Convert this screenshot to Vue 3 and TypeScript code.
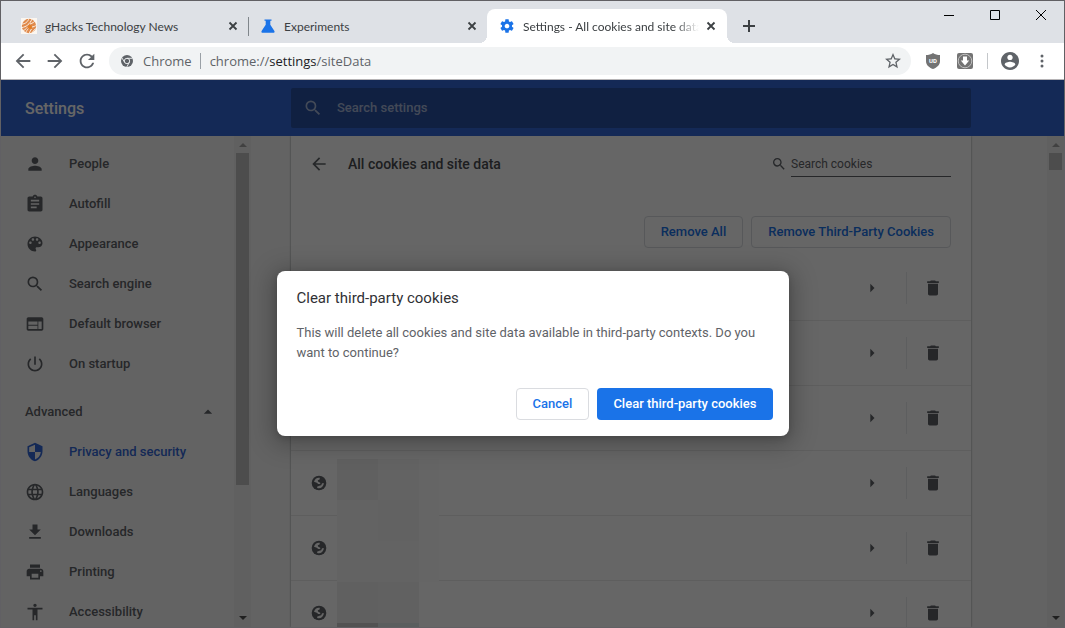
<script setup lang="ts">
import { ref } from 'vue'

interface Tab {
  title: string
  icon: 'swirl' | 'flask' | 'gear'
  active?: boolean
}

interface NavItem {
  label: string
  path: string
  active?: boolean
}

const tabs: Tab[] = [
  { title: 'gHacks Technology News', icon: 'swirl' },
  { title: 'Experiments', icon: 'flask' },
  { title: 'Settings - All cookies and site data', icon: 'gear', active: true },
]

const searchPath =
  'M15.5 14h-.79l-.28-.27A6.47 6.47 0 0 0 16 9.5 6.5 6.5 0 1 0 9.5 16c1.61 0 3.09-.59 4.23-1.57l.27.28v.79l5 4.99L20.49 19l-4.99-5zm-6 0C7.01 14 5 11.99 5 9.5S7.01 5 9.5 5 14 7.01 14 9.5 11.99 14 9.5 14z'
const backPath = 'M20 11H7.83l5.59-5.59L12 4l-8 8 8 8 1.41-1.41L7.83 13H20v-2z'
const forwardPath = 'M12 4l-1.41 1.41L16.17 11H4v2h12.17l-5.58 5.59L12 20l8-8z'

const basicItems: NavItem[] = [
  { label: 'People', path: 'M12 12c2.21 0 4-1.79 4-4s-1.79-4-4-4-4 1.79-4 4 1.79 4 4 4zm0 2c-2.67 0-8 1.34-8 4v2h16v-2c0-2.66-5.33-4-8-4z' },
  { label: 'Autofill', path: 'M19 3h-4.18C14.4 1.84 13.3 1 12 1c-1.3 0-2.4.84-2.82 2H5c-1.1 0-2 .9-2 2v14c0 1.1.9 2 2 2h14c1.1 0 2-.9 2-2V5c0-1.1-.9-2-2-2zm-7 0c.55 0 1 .45 1 1s-.45 1-1 1-1-.45-1-1 .45-1 1-1zm2 14H7v-2h7v2zm3-4H7v-2h10v2zm0-4H7V7h10v2z' },
  { label: 'Appearance', path: 'M12 3c-4.97 0-9 4.03-9 9s4.03 9 9 9c.83 0 1.5-.67 1.5-1.5 0-.39-.15-.74-.39-1.01-.23-.26-.38-.61-.38-.99 0-.83.67-1.5 1.5-1.5H16c2.76 0 5-2.24 5-5 0-4.42-4.03-8-9-8zm-5.500 9c-.83 0-1.500-.67-1.500-1.500S5.670 9 6.500 9 8 9.670 8 10.500 7.330 12 6.500 12zm3-4C8.670 8 8 7.330 8 6.500S8.670 5 9.500 5s1.500.67 1.500 1.500S10.330 8 9.500 8zm5 0c-.83 0-1.500-.67-1.500-1.500S13.670 5 14.500 5s1.500.67 1.500 1.500S15.330 8 14.500 8zm3 4c-.83 0-1.500-.67-1.500-1.500S16.670 9 17.500 9s1.500.67 1.500 1.500-.67 1.500-1.500 1.500z' },
  { label: 'Search engine', path: searchPath },
  { label: 'Default browser', path: 'M20 4H4c-1.100 0-1.990.9-1.990 2L2 18c0 1.100.9 2 2 2h16c1.100 0 2-.9 2-2V6c0-1.100-.9-2-2-2zm-5 14H4v-4h11v4zm0-5H4V9h11v4zm5 5h-4V9h4v9z' },
  { label: 'On startup', path: 'M13 3h-2v10h2V3zm4.830 2.170l-1.420 1.420C17.990 7.860 19 9.810 19 12c0 3.870-3.130 7-7 7s-7-3.130-7-7c0-2.190 1.010-4.140 2.580-5.420L6.170 5.170C4.230 6.820 3 9.260 3 12c0 4.970 4.030 9 9 9s9-4.030 9-9c0-2.740-1.230-5.180-3.170-6.830z' },
]

const advancedItems: NavItem[] = [
  { label: 'Privacy and security', active: true, path: 'M12 1L3 5v6c0 5.550 3.840 10.740 9 12 5.160-1.260 9-6.450 9-12V5l-9-4zm0 10.990h7c-.53 4.120-3.280 7.790-7 8.940V12H5V6.300l7-3.110v8.800z' },
  { label: 'Languages', path: 'M11.990 2C6.470 2 2 6.480 2 12s4.470 10 9.990 10C17.520 22 22 17.520 22 12S17.520 2 11.990 2zm6.930 6h-2.950c-.32-1.250-.78-2.450-1.380-3.560 1.840.63 3.370 1.910 4.330 3.560zM12 4.040c.83 1.200 1.480 2.530 1.910 3.960h-3.820c.43-1.430 1.080-2.760 1.910-3.960zM4.260 14C4.100 13.360 4 12.690 4 12s.1-1.360.26-2h3.380c-.08.66-.14 1.320-.14 2s.06 1.340.14 2H4.260zm.82 2h2.950c.32 1.250.78 2.450 1.380 3.560-1.840-.63-3.370-1.900-4.330-3.560zm2.950-8H5.080c.96-1.660 2.490-2.930 4.330-3.560C8.810 5.550 8.350 6.750 8.030 8zM12 19.960c-.83-1.200-1.480-2.530-1.910-3.960h3.820c-.43 1.430-1.080 2.760-1.910 3.960zM14.340 14H9.660c-.09-.66-.16-1.320-.16-2s.07-1.350.16-2h4.680c.09.65.16 1.320.16 2s-.07 1.340-.16 2zm.25 5.560c.6-1.110 1.060-2.310 1.380-3.560h2.950c-.96 1.650-2.490 2.930-4.330 3.560zM16.360 14c.08-.66.14-1.320.14-2s-.06-1.340-.14-2h3.380c.16.64.26 1.310.26 2s-.1 1.360-.26 2h-3.380z' },
  { label: 'Downloads', path: 'M19 9h-4V3H9v6H5l7 7 7-7zM5 18v2h14v-2H5z' },
  { label: 'Printing', path: 'M19 8H5c-1.660 0-3 1.340-3 3v6h4v4h12v-4h4v-6c0-1.660-1.340-3-3-3zm-3 11H8v-5h8v5zm3-7c-.55 0-1-.45-1-1s.45-1 1-1 1 .45 1 1-.45 1-1 1zm-1-9H6v4h12V3z' },
  { label: 'Accessibility', path: 'M12 2c1.100 0 2 .9 2 2s-.9 2-2 2-2-.9-2-2 .9-2 2-2zm9 7h-6v13h-2v-6h-2v6H9V9H3V7h18v2z' },
]

const sites = [1, 2, 3, 4, 5, 6]
const mosaic = [
  '#efefef', '#f8f8f8', '#fdfdfd',
  '#f8f8f8', '#f4f4f4', '#fcfcfc',
  '#f8f8f8', '#f8f8f8', '#fcfcfc',
  '#efefef', '#f3f3f3', 'transparent',
  '#cccccc', '#e2eaea', 'transparent',
]

const settingsQuery = ref('')
const cookieQuery = ref('')
const dialogOpen = ref(true)
</script>

<template>
  <div class="window">
    <header class="tabstrip">
      <div class="tabs" role="tablist">
        <div v-for="tab in tabs" :key="tab.title" class="tab" :class="{ active: tab.active }" role="tab" :aria-selected="!!tab.active">
          <svg v-if="tab.icon === 'swirl'" class="i16" viewBox="0 0 16 16">
            <rect width="16" height="16" fill="#fbf6f0" />
            <circle cx="8" cy="8" r="7.200" fill="#e08a4c" />
            <g fill="none" stroke="#fbf0e4" stroke-width="1">
              <path d="M1 6C4 6 7 4 8 0M1 9.500C5 9 9 6 11 1M2 12.500c2-.5 3-1.500 4-3M9 6c3-1 4-2 5-3M10.500 9c2 0 4-1 5-2M4.500 15c1-2 1.500-3 3-4.500M8 15.500c1-2 1.500-3 2.500-4.500M11.500 14.500c.5-1.500 1-2 3-4" />
            </g>
            <circle cx="9" cy="9" r="2" fill="#e27c23" />
          </svg>
          <svg v-else-if="tab.icon === 'flask'" class="i16" viewBox="0 0 16 16" fill="#1a73e8">
            <path d="M4.500 1.500h7v1.300h-1.200v4l4.100 6.200c.5.900 0 1.800-1 1.800H2.600c-1 0-1.500-.9-1-1.800l4.100-6.200v-4H4.500z" />
          </svg>
          <svg v-else class="i16" viewBox="0 0 24 24" fill="#1a73e8">
            <path d="M19.430 12.980c.04-.32.07-.64.07-.98s-.03-.66-.07-.98l2.110-1.650c.19-.15.24-.42.12-.64l-2-3.460c-.12-.22-.39-.3-.61-.22l-2.490 1c-.52-.4-1.080-.73-1.690-.98l-.38-2.650C14.460 2.180 14.250 2 14 2h-4c-.25 0-.46.18-.49.420l-.38 2.650c-.61.250-1.170.590-1.690.980l-2.490-1c-.23-.09-.49 0-.61.220l-2 3.460c-.13.220-.07.490.12.640l2.110 1.650c-.04.320-.07.650-.07.980s.03.660.07.980l-2.110 1.650c-.19.150-.24.420-.12.640l2 3.460c.12.220.39.300.61.220l2.490-1c.52.400 1.080.730 1.690.980l.38 2.650c.03.240.24.420.49.420h4c.25 0 .46-.18.49-.42l.38-2.650c.61-.25 1.170-.59 1.690-.98l2.490 1c.23.090.49 0 .61-.22l2-3.460c.12-.22.070-.49-.12-.64l-2.110-1.650zM12 15.500c-1.930 0-3.500-1.570-3.500-3.500s1.570-3.500 3.500-3.500 3.500 1.570 3.500 3.500-1.570 3.500-3.500 3.500z" />
          </svg>
          <span class="tab-title">{{ tab.title }}</span>
          <button class="tab-close" type="button" :aria-label="`Close ${tab.title}`">
            <svg class="i16" viewBox="0 0 16 16"><path d="M4.500 4.500l7 7m0-7l-7 7" stroke="#3c4043" stroke-width="1.800" /></svg>
          </button>
        </div>
        <button class="new-tab" type="button" aria-label="New tab">
          <svg class="i16" viewBox="0 0 16 16"><path d="M8 2v12M2 8h12" stroke="#3c4043" stroke-width="2" /></svg>
        </button>
      </div>
      <div class="controls">
        <button type="button" aria-label="Minimize"><svg class="i16" viewBox="0 0 16 16"><path d="M3 8.500h10" stroke="#000" /></svg></button>
        <button type="button" aria-label="Maximize"><svg class="i16" viewBox="0 0 16 16"><path d="M3.500 3.500h9v9h-9z" fill="none" stroke="#000" /></svg></button>
        <button type="button" aria-label="Close window"><svg class="i16" viewBox="0 0 16 16"><path d="M3 3l10 10M13 3L3 13" stroke="#000" /></svg></button>
      </div>
    </header>

    <div class="toolbar">
      <button class="tool" type="button" aria-label="Back"><svg class="i22" viewBox="0 0 24 24"><path :d="backPath" /></svg></button>
      <button class="tool" type="button" aria-label="Forward"><svg class="i22" viewBox="0 0 24 24"><path :d="forwardPath" /></svg></button>
      <button class="tool" type="button" aria-label="Reload">
        <svg class="i22" viewBox="0 0 24 24"><path d="M17.650 6.350C16.200 4.900 14.210 4 12 4c-4.420 0-7.990 3.580-7.990 8s3.570 8 7.990 8c3.730 0 6.840-2.550 7.730-6h-2.080c-.82 2.330-3.040 4-5.650 4-3.310 0-6-2.690-6-6s2.690-6 6-6c1.660 0 3.140.69 4.220 1.780L13 11h7V4l-2.350 2.350z" /></svg>
      </button>
      <div class="omnibox">
        <svg class="i12" viewBox="0 0 24 24">
          <circle cx="12" cy="12" r="12" fill="#5f6368" />
          <circle cx="12" cy="12" r="5.400" fill="none" stroke="#f1f3f4" stroke-width="1.800" />
          <path d="M12 6.600h11M7.400 14.800L1.700 5.500M16.700 14.700L11.500 24" stroke="#f1f3f4" stroke-width="1.800" />
        </svg>
        <span class="origin">Chrome</span>
        <span class="divider"></span>
        <span class="url">chrome://<b>settings</b>/siteData</span>
        <button class="star" type="button" aria-label="Bookmark this page">
          <svg class="i16" viewBox="2 2 20 20" fill="#5f6368"><path d="M22 9.240l-7.190-.62L12 2 9.190 8.630 2 9.240l5.460 4.730L5.820 21 12 17.270 18.180 21l-1.630-7.030L22 9.240zM12 15.400l-3.760 2.270 1-4.280-3.320-2.880 4.380-.38L12 6.100l1.710 4.040 4.380.38-3.320 2.880 1 4.280L12 15.400z" /></svg>
        </button>
      </div>
      <button class="tool" type="button" aria-label="Content blocker">
        <svg class="i16" viewBox="0 0 16 16">
          <path d="M8 0c2 1.500 4.500 2 7 2v6c0 4-3 6.500-7 8-4-1.500-7-4-7-8V2c2.500 0 5-.5 7-2z" fill="#737373" />
          <text x="8" y="10" text-anchor="middle" class="badge-text">UD</text>
        </svg>
      </button>
      <button class="tool" type="button" aria-label="Downloader">
        <svg class="i16" viewBox="0 0 16 16">
          <rect width="16" height="16" rx="2" fill="#737373" />
          <circle cx="8" cy="8" r="6.800" fill="none" stroke="#c0c0c0" stroke-width="1" />
          <path d="M6 3.500h4v4h2.200L8 12.500 3.800 7.500H6z" fill="#fff" />
        </svg>
      </button>
      <span class="tool-divider"></span>
      <button class="tool" type="button" aria-label="Profile">
        <svg class="i18" viewBox="2 2 20 20"><path d="M12 2C6.480 2 2 6.480 2 12s4.480 10 10 10 10-4.480 10-10S17.520 2 12 2zm0 3c1.660 0 3 1.340 3 3s-1.340 3-3 3-3-1.340-3-3 1.340-3 3-3zm0 14.200c-2.500 0-4.710-1.280-6-3.220.03-1.990 4-3.080 6-3.080 1.990 0 5.970 1.090 6 3.080-1.290 1.940-3.500 3.220-6 3.220z" /></svg>
      </button>
      <button class="tool" type="button" aria-label="Menu">
        <svg class="i16" viewBox="0 0 16 16"><circle cx="8" cy="3" r="1.500" /><circle cx="8" cy="8" r="1.500" /><circle cx="8" cy="13" r="1.500" /></svg>
      </button>
    </div>

    <div class="page">
      <header class="page-header">
        <h1>Settings</h1>
        <label class="settings-search">
          <svg class="i20" viewBox="0 0 24 24"><path :d="searchPath" /></svg>
          <input v-model="settingsQuery" type="search" placeholder="Search settings" aria-label="Search settings">
        </label>
      </header>

      <div class="body">
        <nav class="sidebar">
          <a v-for="item in basicItems" :key="item.label" href="#">
            <svg class="i20" viewBox="0 0 24 24"><path :d="item.path" fill-rule="evenodd" /></svg>
            <span>{{ item.label }}</span>
          </a>
          <button class="advanced" type="button">
            <span>Advanced</span>
            <svg class="i20" viewBox="0 0 24 24"><path d="M7 14l5-5 5 5z" /></svg>
          </button>
          <a v-for="item in advancedItems" :key="item.label" href="#" :class="{ current: item.active }">
            <svg class="i20" viewBox="0 0 24 24"><path :d="item.path" /></svg>
            <span>{{ item.label }}</span>
          </a>
        </nav>
        <div class="scrollbar">
          <span class="up"></span><span class="thumb long"></span><span class="down"></span>
        </div>

        <main>
          <section class="card">
            <div class="card-head">
              <button class="back" type="button" aria-label="Back to content settings"><svg class="i20" viewBox="0 0 24 24"><path :d="backPath" /></svg></button>
              <h2>All cookies and site data</h2>
              <label class="cookie-search">
                <svg class="i16" viewBox="0 0 24 24"><path :d="searchPath" /></svg>
                <input v-model="cookieQuery" type="search" placeholder="Search cookies" aria-label="Search cookies">
              </label>
            </div>
            <div class="actions">
              <button class="outlined" type="button">Remove All</button>
              <button class="outlined" type="button" @click="dialogOpen = true">Remove Third-Party Cookies</button>
            </div>
            <div class="list">
              <div v-for="site in sites" :key="site" class="row">
                <svg class="i16" viewBox="0 0 16 16">
                  <circle cx="8" cy="8" r="7.300" />
                  <path d="M8.800 2.800C6.200 2.300 3.600 4 3 6.800l2.800 1 1.400 1.100h2V7.700L7 6.500l-.2-1.300 1.800-.8z" fill="#fff" />
                  <path d="M13 8.200l-1.900.1-.9 2-1.800.4-2.400 1 .3 1.200c2.900 1.100 6-.9 6.700-4.700z" fill="#fff" />
                </svg>
                <button class="expand" type="button" aria-label="Show site details"><svg class="i20" viewBox="0 0 24 24"><path d="M10 7l5 5-5 5z" /></svg></button>
                <span class="row-divider"></span>
                <button class="trash" type="button" aria-label="Remove site"><svg class="i20" viewBox="0 0 24 24"><path d="M6 19c0 1.100.9 2 2 2h8c1.100 0 2-.9 2-2V7H6v12zM19 4h-3.500l-1-1h-5l-1 1H5v2h14V4z" /></svg></button>
              </div>
              <div class="mosaic" aria-hidden="true">
                <i v-for="(tone, index) in mosaic" :key="index" :style="{ background: tone }"></i>
              </div>
            </div>
          </section>
        </main>
        <div class="scrollbar">
          <span class="up"></span><span class="thumb"></span><span class="down"></span>
        </div>
      </div>

      <div v-if="dialogOpen" class="backdrop">
        <div class="dialog" role="dialog" aria-modal="true" aria-labelledby="dialog-title">
          <h3 id="dialog-title">Clear third-party cookies</h3>
          <p>This will delete all cookies and site data available in third-party contexts. Do you want to continue?</p>
          <div class="dialog-actions">
            <button class="outlined" type="button" @click="dialogOpen = false">Cancel</button>
            <button class="filled" type="button" @click="dialogOpen = false">Clear third-party cookies</button>
          </div>
        </div>
      </div>
    </div>
  </div>
</template>

<style>
body {
  margin: 0;
}
</style>

<style scoped>
* {
  box-sizing: border-box;
}
.window {
  display: flex;
  flex-direction: column;
  height: 100vh;
  overflow: hidden;
  border: 1px solid #616064;
  background: #fff;
  font-family: Roboto, "Liberation Sans", sans-serif;
  font-size: 13px;
}
button {
  margin: 0;
  padding: 0;
  border: 0;
  background: none;
  font: inherit;
  color: inherit;
}
svg {
  display: block;
  flex: none;
}
.i12 { width: 12px; height: 12px; }
.i16 { width: 16px; height: 16px; }
.i18 { width: 18px; height: 18px; }
.i20 { width: 20px; height: 20px; }
.i22 { width: 22px; height: 22px; }

.tabstrip {
  display: flex;
  justify-content: space-between;
  flex: none;
  height: 42px;
  background: #dee1e6;
  font-family: Lato, "Open Sans", sans-serif;
  font-size: 12px;
  color: #3c4043;
}
.tabs {
  display: flex;
  flex: 1;
  min-width: 0;
  padding: 8px 0 0 8px;
}
.tab {
  position: relative;
  display: flex;
  align-items: center;
  flex: 0 1 239px;
  min-width: 0;
  padding: 0 7px 0 12px;
}
.tab:nth-child(2) {
  background: linear-gradient(#80868b, #80868b) left 8px / 1px 19px no-repeat;
}
.tab.active {
  flex-basis: 240px;
  padding-right: 8px;
  border-radius: 8px 8px 0 0;
  background: #fff;
}
.tab.active::before,
.tab.active::after {
  content: "";
  position: absolute;
  bottom: 0;
  width: 8px;
  height: 8px;
}
.tab.active::before {
  right: 100%;
  background: radial-gradient(circle at 0 0, transparent 8px, #fff 8px);
}
.tab.active::after {
  left: 100%;
  background: radial-gradient(circle at 100% 0, transparent 8px, #fff 8px);
}
.tab-title {
  flex: 1;
  min-width: 0;
  margin: 0 4px 0 8px;
  overflow: hidden;
  white-space: nowrap;
}
.tab.active .tab-title {
  mask-image: linear-gradient(90deg, #000 calc(100% - 24px), transparent);
}
.new-tab {
  padding: 0 14px;
}
.controls {
  display: flex;
  height: 28px;
}
.controls button {
  display: grid;
  place-items: center;
  width: 46px;
}

.toolbar {
  display: flex;
  align-items: center;
  flex: none;
  height: 37px;
  padding: 0 6px;
  border-bottom: 1px solid #b6b4b6;
  fill: #5f6368;
}
.tool {
  display: grid;
  place-items: center;
  width: 32px;
  height: 28px;
}
.omnibox {
  display: flex;
  align-items: center;
  flex: 1;
  height: 28px;
  margin: 0 6px;
  padding: 0 10px 0 12px;
  border-radius: 14px;
  background: #f1f3f4;
  font-family: "Open Sans", "Noto Sans", sans-serif;
  font-size: 13px;
  color: #5f6368;
}
.origin {
  margin: 0 8px 0 10px;
}
.divider,
.tool-divider {
  width: 1px;
  height: 16px;
  background: #9aa0a6;
}
.tool-divider {
  margin: 0 6px;
  background: #c4c7ca;
}
.url {
  flex: 1;
  margin-left: 9px;
}
.url b {
  font-weight: 400;
  color: #202124;
}
.badge-text {
  font: bold 6px Roboto, sans-serif;
  fill: #fff;
}

.page {
  position: relative;
  display: flex;
  flex-direction: column;
  flex: 1;
  min-height: 0;
  background: #f8f8f8;
}
.page-header {
  display: flex;
  align-items: center;
  flex: none;
  height: 56px;
  padding-right: 93px;
  background: #3367d6;
  color: #fff;
}
h1 {
  flex: none;
  width: 290px;
  margin: 0;
  padding-left: 24px;
  font-size: 16px;
  font-weight: 500;
}
.settings-search {
  display: flex;
  align-items: center;
  flex: 1;
  max-width: 680px;
  height: 40px;
  padding: 0 12px;
  border-radius: 2px;
  background: #2850a3;
  fill: rgba(255, 255, 255, 0.6);
}
input {
  flex: 1;
  min-width: 0;
  padding: 0;
  border: 0;
  outline: 0;
  background: none;
  font: inherit;
  appearance: none;
}
.settings-search input {
  margin-left: 14px;
  padding-bottom: 2px;
  font-weight: 500;
  color: #fff;
}
.settings-search input::placeholder {
  color: rgba(255, 255, 255, 0.6);
}

.body {
  display: flex;
  flex: 1;
  min-height: 0;
}
.sidebar {
  flex: none;
  width: 233px;
  padding-top: 8px;
  overflow: hidden;
}
.sidebar a,
.advanced {
  display: flex;
  align-items: center;
  gap: 24px;
  width: 100%;
  height: 40px;
  padding: 0 16px 0 24px;
  font-weight: 500;
  color: #5f6368;
  fill: #5f6368;
  text-decoration: none;
}
.sidebar span {
  padding-bottom: 2px;
}
.sidebar .advanced {
  justify-content: space-between;
  margin-top: 8px;
}
.sidebar .current {
  color: #3367d6;
  fill: #3367d6;
}
.scrollbar {
  display: flex;
  flex-direction: column;
  align-items: center;
  flex: none;
  width: 17px;
  padding: 7px 0;
  background: #f1f1f1;
}
.thumb {
  flex: none;
  width: 13px;
  height: 17px;
  margin-top: 6px;
  background: #c1c1c1;
}
.thumb.long {
  height: 332px;
}
.up,
.down {
  flex: none;
  border: 4px solid transparent;
}
.up {
  border-top: 0;
  border-bottom-color: #a3a3a3;
}
.down {
  margin-top: auto;
  border-bottom: 0;
  border-top-color: #505050;
}

main {
  display: flex;
  flex: 1;
  min-width: 0;
  padding: 0 76px 0 40px;
  overflow: hidden;
}
.card {
  flex: 1;
  min-width: 0;
  max-width: 680px;
  background: #fff;
  box-shadow: 0 0 2px rgba(60, 64, 67, 0.6);
}
.card-head {
  display: flex;
  align-items: center;
  height: 56px;
  padding: 0 20px 0 18px;
  fill: #5f6368;
}
h2 {
  flex: 1;
  margin: 0 0 0 19px;
  font-size: 14px;
  font-weight: 500;
  color: #4a4d51;
}
.cookie-search {
  display: flex;
  align-items: center;
  gap: 4px;
}
.cookie-search input {
  width: 160px;
  height: 26px;
  border-bottom: 1px solid #5f6368;
  font-size: 12px;
  color: #202124;
}
.cookie-search input::placeholder {
  color: #5f6368;
}
.actions {
  display: flex;
  justify-content: flex-end;
  gap: 8px;
  padding: 24px 20px 8px;
}
.outlined,
.filled {
  height: 32px;
  padding: 0 16px 2px;
  border-radius: 4px;
  font-weight: 500;
}
.outlined {
  border: 1px solid #dadce0;
  color: #1a73e8;
}
.filled {
  background: #1a73e8;
  color: #fff;
}
.list {
  position: relative;
}
.row {
  display: flex;
  align-items: center;
  height: 65px;
  padding: 0 28px 0 20px;
  border-bottom: 1px solid #ebebeb;
  fill: #5f6368;
}
.expand {
  margin-left: auto;
}
.row-divider {
  width: 1px;
  height: 32px;
  margin: 0 16px 0 24px;
  background: #e8eaed;
}
.mosaic {
  position: absolute;
  top: 203px;
  left: 46px;
  display: grid;
  grid-template-columns: 41px 41px 20px;
  grid-template-rows: 41px 41px 41px 41px 4px;
}

.backdrop {
  position: absolute;
  inset: 0;
  display: flex;
  align-items: center;
  justify-content: center;
  background: rgba(0, 0, 0, 0.6);
}
.dialog {
  width: 512px;
  max-width: 90%;
  padding: 16px 16px 16px 20px;
  border-radius: 8px;
  background: #fff;
  box-shadow: 0 4px 23px 5px rgba(0, 0, 0, 0.25), 0 2px 6px rgba(0, 0, 0, 0.15);
}
h3 {
  margin: 0 0 13px;
  font-size: 15px;
  font-weight: 400;
  line-height: 23px;
  color: #303135;
}
.dialog p {
  margin: 0 0 25px;
  line-height: 20px;
  color: #5f6368;
}
.dialog-actions {
  display: flex;
  justify-content: flex-end;
  gap: 8px;
}
</style>
